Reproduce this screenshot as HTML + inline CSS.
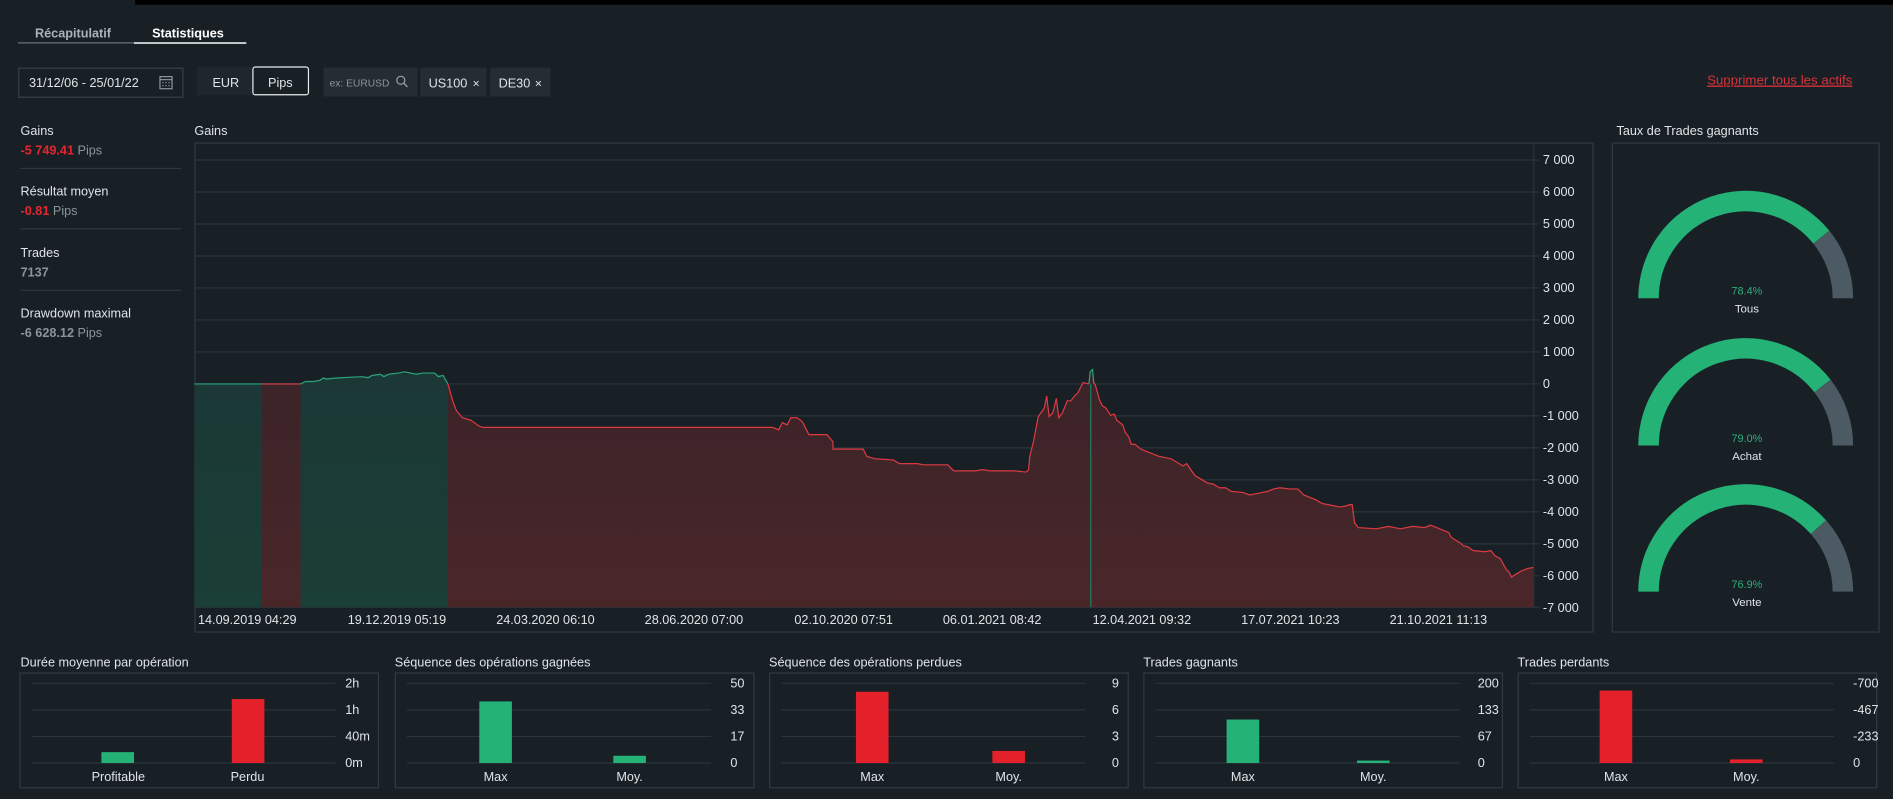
<!DOCTYPE html>
<html><head><meta charset="utf-8"><style>
html,body{margin:0;padding:0;background:#182026;width:1893px;height:799px;overflow:hidden}
svg{display:block}
text{font-family:"Liberation Sans",sans-serif;fill:#dfe4e8;font-size:10.5px}
.g{fill:#8a949b}.r{fill:#e3262f}.ax{font-size:10.5px}
</style></head><body>
<svg width="1893" height="799" viewBox="0 0 1568 661.8" xmlns="http://www.w3.org/2000/svg">
<defs>
<linearGradient id="rf" x1="0" y1="0" x2="0" y2="1"><stop offset="0" stop-color="#3a2429"/><stop offset="1" stop-color="#4a2629"/></linearGradient>
<linearGradient id="gf" x1="0" y1="0" x2="0" y2="1"><stop offset="0" stop-color="#1b3836"/><stop offset="1" stop-color="#1a3f36"/></linearGradient>
</defs>
<rect width="1568" height="662" fill="#182026"/>
<rect x="112" y="0" width="1456" height="4" fill="#000"/>
<text x="29" y="31" class="g" style="font-weight:bold;font-size:10.5px;fill:#aab3b9">Récapitulatif</text>
<text x="126" y="31" style="font-weight:bold;font-size:10.5px;fill:#fff">Statistiques</text>
<rect x="15" y="35" width="189" height="1" fill="#6a757c"/>
<rect x="111" y="35" width="93" height="1.3" fill="#e8ecef"/>
<rect x="15.5" y="56.5" width="136" height="24" fill="none" stroke="#364149"/>
<text x="24" y="72" style="font-size:10.5px">31/12/06 - 25/01/22</text>
<g stroke="#9aa3a9" fill="none" stroke-width="0.9"><rect x="132.5" y="63.5" width="10" height="10"/><line x1="132.5" y1="66" x2="142.5" y2="66"/></g>
<g fill="#9aa3a9"><rect x="134.5" y="68" width="1" height="1"/><rect x="137" y="68" width="1" height="1"/><rect x="139.5" y="68" width="1" height="1"/><rect x="134.5" y="70.5" width="1" height="1"/><rect x="137" y="70.5" width="1" height="1"/><rect x="139.5" y="70.5" width="1" height="1"/></g>
<rect x="163" y="55" width="47" height="24" fill="#1e272d"/>
<text x="176" y="72">EUR</text>
<rect x="209.5" y="55.5" width="46" height="23" rx="2" fill="#182026" stroke="#e6eaec"/>
<text x="222" y="72">Pips</text>
<rect x="268" y="56" width="78" height="24" fill="#242d33"/>
<text x="273" y="71.5" class="g" style="font-size:8.5px">ex: EURUSD</text>
<circle cx="332" cy="66.5" r="3.3" fill="none" stroke="#9aa3a9" stroke-width="1"/><line x1="334.5" y1="69" x2="337.5" y2="72" stroke="#9aa3a9" stroke-width="1.1"/>
<rect x="348" y="56" width="55" height="24" fill="#242d33"/>
<text x="355" y="72.5">US100</text><text x="391.5" y="72.5" style="font-size:10px">×</text>
<rect x="406" y="56" width="50" height="24" fill="#242d33"/>
<text x="413" y="72.5">DE30</text><text x="443" y="72.5" style="font-size:10px">×</text>
<text x="1414" y="70" style="fill:#d8333a;text-decoration:underline;font-size:11px">Supprimer tous les actifs</text>
<text x="17" y="112">Gains</text>
<text x="17" y="128"><tspan class="r" style="font-weight:bold">-5 749.41</tspan><tspan class="g"> Pips</tspan></text>
<rect x="17" y="139" width="133" height="1" fill="#2d383f"/>
<text x="17" y="162">Résultat moyen</text>
<text x="17" y="178"><tspan class="r" style="font-weight:bold">-0.81</tspan><tspan class="g"> Pips</tspan></text>
<rect x="17" y="189" width="133" height="1" fill="#2d383f"/>
<text x="17" y="213">Trades</text>
<text x="17" y="229" class="g" style="font-weight:bold">7137</text>
<rect x="17" y="240" width="133" height="1" fill="#2d383f"/>
<text x="17" y="263">Drawdown maximal</text>
<text x="17" y="279" class="g"><tspan style="font-weight:bold">-6 628.12</tspan> Pips</text>
<text x="161" y="112">Gains</text>
<rect x="161.5" y="118.5" width="1158" height="405" fill="none" stroke="#2e3a41"/>
<g stroke="#2c3840" stroke-width="0.8">
<line x1="162" y1="132.5" x2="1275" y2="132.5"/><line x1="162" y1="159" x2="1275" y2="159"/><line x1="162" y1="185.5" x2="1275" y2="185.5"/><line x1="162" y1="212" x2="1275" y2="212"/><line x1="162" y1="238.5" x2="1275" y2="238.5"/><line x1="162" y1="265" x2="1275" y2="265"/><line x1="162" y1="291.5" x2="1275" y2="291.5"/><line x1="162" y1="318" x2="1275" y2="318"/><line x1="162" y1="344.5" x2="1275" y2="344.5"/><line x1="162" y1="371" x2="1275" y2="371"/><line x1="162" y1="397.5" x2="1275" y2="397.5"/><line x1="162" y1="424" x2="1275" y2="424"/><line x1="162" y1="450.5" x2="1275" y2="450.5"/><line x1="162" y1="477" x2="1275" y2="477"/><line x1="162" y1="503" x2="1275" y2="503"/>
<line x1="1270.5" y1="119" x2="1270.5" y2="503"/>
</g>
<polygon fill="url(#rf)" points="161,318 372,318 375,332 378,340 383,346 390,348 397,353 400,354 640,354 645,356 648,350 652,352 655,346 660,346 663,348 665,350 668,356 670,360 685,360 690,366 690,372 715,372 718,378 725,380 740,381 745,384 760,384 765,385 785,385 790,390 808,390 814,389 820,390 840,390 850,391 852,389 853,378 856,366 860,345 865,338 867,328 869,345 872,342 875,330 877,346 880,342 884,332 887,332 890,328 893,325 897,317 902,318 903,308 905,306 907,318 909,325 911,332 913,336 916,338 920,344 923,343 925,348 930,352 932,358 935,362 937,368 940,368 945,372 950,374 955,376 960,378 965,379 970,380 975,383 980,386 983,384 987,390 990,394 995,397 1000,400 1005,401 1010,404 1015,404 1020,407 1030,408 1035,410 1040,409 1045,408 1050,407 1055,405 1060,404 1068,405 1075,405 1080,410 1090,414 1095,417 1100,418 1110,420 1115,419 1118,418 1120,418 1122,433 1125,437 1140,438 1150,436 1160,438 1170,436 1180,437 1185,435 1190,437 1195,439 1200,441 1202,445 1205,447 1210,450 1212,452 1216,453 1220,456 1230,457 1235,456 1238,460 1243,463 1245,467 1248,472 1250,474 1252,478 1255,476 1260,473 1265,471 1270,470 1270,503 161,503"/>
<rect x="161" y="318" width="56" height="185" fill="url(#gf)"/>
<polygon fill="url(#gf)" points="249,318 253,316 265,315 268,313 300,312 315,310 330,309 345,310 360,309 367,311 371,318 371,503 249,503"/>
<polyline fill="none" stroke="#2aa37a" stroke-width="1" points="161,318 217,318"/>
<polyline fill="none" stroke="#d7434a" stroke-width="1" points="217,318 249,318"/>
<polyline fill="none" stroke="#2aa37a" stroke-width="1" points="249,318 253,316 260,316 265,315 268,313 270,314 280,313 300,312 305,313 308,311 315,310 318,312 322,310 330,309 335,308 345,310 350,309 360,309 363,312 367,311 371,318"/>
<polyline fill="none" stroke="#dc3a41" stroke-width="1" points="371,318 375,332 378,340 383,346 390,348 397,353 400,354 640,354 645,356 648,350 652,352 655,346 660,346 663,348 665,350 668,356 670,360 685,360 690,366 690,372 715,372 718,378 725,380 740,381 745,384 760,384 765,385 785,385 790,390 808,390 814,389 820,390 840,390 850,391 852,389 853,378 856,366 860,345 865,338 867,328 869,345 872,342 875,330 877,346 880,342 884,332 887,332 890,328 893,325 897,317 902,318"/>
<polyline fill="none" stroke="#2aa37a" stroke-width="1" points="902,318 903,308 905,306 906,318"/>
<line x1="903.5" y1="318" x2="903.5" y2="503" stroke="#1f7f62" stroke-width="1"/>
<polyline fill="none" stroke="#dc3a41" stroke-width="1" points="906,318 907,318 909,325 911,332 913,336 916,338 920,344 923,343 925,348 930,352 932,358 935,362 937,368 940,368 945,372 950,374 955,376 960,378 965,379 970,380 975,383 980,386 983,384 987,390 990,394 995,397 1000,400 1005,401 1010,404 1015,404 1020,407 1030,408 1035,410 1040,409 1045,408 1050,407 1055,405 1060,404 1068,405 1075,405 1080,410 1090,414 1095,417 1100,418 1110,420 1115,419 1118,418 1120,418 1122,433 1125,437 1140,438 1150,436 1160,438 1170,436 1180,437 1185,435 1190,437 1195,439 1200,441 1202,445 1205,447 1210,450 1212,452 1216,453 1220,456 1230,457 1235,456 1238,460 1243,463 1245,467 1248,472 1250,474 1252,478 1255,476 1260,473 1265,471 1270,470"/>
<g class="ax" style="font-size:10px">
<text x="1278" y="136">7 000</text><text x="1278" y="162.5">6 000</text><text x="1278" y="189">5 000</text><text x="1278" y="215.5">4 000</text><text x="1278" y="242">3 000</text><text x="1278" y="268.5">2 000</text><text x="1278" y="295">1 000</text><text x="1278" y="321.5">0</text><text x="1278" y="348">-1 000</text><text x="1278" y="374.5">-2 000</text><text x="1278" y="401">-3 000</text><text x="1278" y="427.5">-4 000</text><text x="1278" y="454">-5 000</text><text x="1278" y="480.5">-6 000</text><text x="1278" y="507">-7 000</text>
<text x="164" y="517">14.09.2019 04:29</text><text x="288" y="517">19.12.2019 05:19</text><text x="411" y="517">24.03.2020 06:10</text><text x="534" y="517">28.06.2020 07:00</text><text x="658" y="517">02.10.2020 07:51</text><text x="781" y="517">06.01.2021 08:42</text><text x="905" y="517">12.04.2021 09:32</text><text x="1028" y="517">17.07.2021 10:23</text><text x="1151" y="517">21.10.2021 11:13</text>
</g>
<text x="1339" y="112">Taux de Trades gagnants</text>
<rect x="1335.5" y="118.5" width="221" height="405" fill="none" stroke="#2e3a41"/>
<g fill="none" stroke-width="17">
<path d="M1365.5 247 A80.5 80.5 0 0 1 1508.6 196.4" stroke="#25b277"/><path d="M1508.6 196.4 A80.5 80.5 0 0 1 1526.5 247" stroke="#4b5a63"/>
<path d="M1365.5 369 A80.5 80.5 0 0 1 1509.6 319.7" stroke="#25b277"/><path d="M1509.6 319.7 A80.5 80.5 0 0 1 1526.5 369" stroke="#4b5a63"/>
<path d="M1365.5 490 A80.5 80.5 0 0 1 1506.2 436.6" stroke="#25b277"/><path d="M1506.2 436.6 A80.5 80.5 0 0 1 1526.5 490" stroke="#4b5a63"/>
</g>
<g text-anchor="middle">
<text x="1447" y="244" style="fill:#2fae7a;font-size:9px">78.4%</text><text x="1447" y="259" style="font-size:9.5px">Tous</text>
<text x="1447" y="366" style="fill:#2fae7a;font-size:9px">79.0%</text><text x="1447" y="381" style="font-size:9.5px">Achat</text>
<text x="1447" y="487" style="fill:#2fae7a;font-size:9px">76.9%</text><text x="1447" y="502" style="font-size:9.5px">Vente</text>
</g>
<g transform="translate(16,0)">
<text x="1" y="552">Durée moyenne par opération</text>
<rect x="0.5" y="557.5" width="297" height="95" fill="none" stroke="#2e3a41"/>
<g stroke="#2c3840" stroke-width="0.8"><line x1="10" y1="566" x2="262" y2="566"/><line x1="10" y1="588" x2="262" y2="588"/><line x1="10" y1="610" x2="262" y2="610"/><line x1="10" y1="632" x2="262" y2="632"/></g>
<rect x="68" y="623" width="27" height="9" fill="#25b277"/><rect x="176" y="579" width="27" height="53" fill="#e4202a"/>
<g style="font-size:10px"><text x="270" y="569.5">2h</text><text x="270" y="591.5">1h</text><text x="270" y="613.5">40m</text><text x="270" y="635.5">0m</text></g>
<g text-anchor="middle"><text x="82" y="647">Profitable</text><text x="189" y="647">Perdu</text></g>
</g>
<g transform="translate(327,0)">
<text x="0" y="552">Séquence des opérations gagnées</text>
<rect x="0.5" y="557.5" width="297" height="95" fill="none" stroke="#2e3a41"/>
<g stroke="#2c3840" stroke-width="0.8"><line x1="10" y1="566" x2="262" y2="566"/><line x1="10" y1="588" x2="262" y2="588"/><line x1="10" y1="610" x2="262" y2="610"/><line x1="10" y1="632" x2="262" y2="632"/></g>
<rect x="70" y="581" width="27" height="51" fill="#25b277"/><rect x="181" y="626" width="27" height="6" fill="#25b277"/>
<g style="font-size:10px"><text x="278" y="569.5">50</text><text x="278" y="591.5">33</text><text x="278" y="613.5">17</text><text x="278" y="635.5">0</text></g>
<g text-anchor="middle"><text x="83.5" y="647">Max</text><text x="194.5" y="647">Moy.</text></g>
</g>
<g transform="translate(637,0)">
<text x="0" y="552">Séquence des opérations perdues</text>
<rect x="0.5" y="557.5" width="297" height="95" fill="none" stroke="#2e3a41"/>
<g stroke="#2c3840" stroke-width="0.8"><line x1="10" y1="566" x2="262" y2="566"/><line x1="10" y1="588" x2="262" y2="588"/><line x1="10" y1="610" x2="262" y2="610"/><line x1="10" y1="632" x2="262" y2="632"/></g>
<rect x="72" y="573" width="27" height="59" fill="#e4202a"/><rect x="185" y="622" width="27" height="10" fill="#e4202a"/>
<g style="font-size:10px"><text x="284" y="569.5">9</text><text x="284" y="591.5">6</text><text x="284" y="613.5">3</text><text x="284" y="635.5">0</text></g>
<g text-anchor="middle"><text x="85.5" y="647">Max</text><text x="198.5" y="647">Moy.</text></g>
</g>
<g transform="translate(947,0)">
<text x="0" y="552">Trades gagnants</text>
<rect x="0.5" y="557.5" width="297" height="95" fill="none" stroke="#2e3a41"/>
<g stroke="#2c3840" stroke-width="0.8"><line x1="10" y1="566" x2="262" y2="566"/><line x1="10" y1="588" x2="262" y2="588"/><line x1="10" y1="610" x2="262" y2="610"/><line x1="10" y1="632" x2="262" y2="632"/></g>
<rect x="69" y="596" width="27" height="36" fill="#25b277"/><rect x="177" y="630" width="27" height="2" fill="#25b277"/>
<g style="font-size:10px"><text x="277" y="569.5">200</text><text x="277" y="591.5">133</text><text x="277" y="613.5">67</text><text x="277" y="635.5">0</text></g>
<g text-anchor="middle"><text x="82.5" y="647">Max</text><text x="190.5" y="647">Moy.</text></g>
</g>
<g transform="translate(1257,0)">
<text x="0" y="552">Trades perdants</text>
<rect x="0.5" y="557.5" width="297" height="95" fill="none" stroke="#2e3a41"/>
<g stroke="#2c3840" stroke-width="0.8"><line x1="10" y1="566" x2="262" y2="566"/><line x1="10" y1="588" x2="262" y2="588"/><line x1="10" y1="610" x2="262" y2="610"/><line x1="10" y1="632" x2="262" y2="632"/></g>
<rect x="68" y="572" width="27" height="60" fill="#e4202a"/><rect x="176" y="629" width="27" height="3" fill="#e4202a"/>
<g style="font-size:10px"><text x="278" y="569.5">-700</text><text x="278" y="591.5">-467</text><text x="278" y="613.5">-233</text><text x="278" y="635.5">0</text></g>
<g text-anchor="middle"><text x="81.5" y="647">Max</text><text x="189.5" y="647">Moy.</text></g>
</g>
</svg>
</body></html>
